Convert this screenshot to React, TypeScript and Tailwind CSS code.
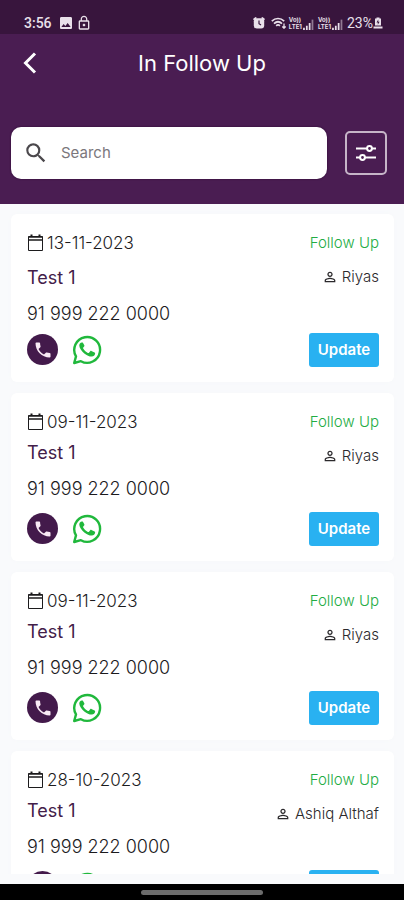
import React from "react";
import { MdImage, MdLockOutline, MdPersonOutline, MdPhone, MdSearch } from "react-icons/md";

type Lead = { date: string; name: string; phone: string; agent: string; spaced?: boolean };

const leads: Lead[] = [
  { date: "13-11-2023", name: "Test 1", phone: "91 999 222 0000", agent: "Riyas", spaced: true },
  { date: "09-11-2023", name: "Test 1", phone: "91 999 222 0000", agent: "Riyas" },
  { date: "09-11-2023", name: "Test 1", phone: "91 999 222 0000", agent: "Riyas" },
  { date: "28-10-2023", name: "Test 1", phone: "91 999 222 0000", agent: "Ashiq Althaf" },
];

function AlarmIcon() {
  return (
    <svg viewBox="0 0 12 12" className="size-3" fill="currentColor">
      <path d="M0 2 2.500 0l1.500 1-3 2.600zM12 2 9.500 0 8 1l3 2.600z" />
      <rect x="0.8" y="1.300" width="10.400" height="10.200" rx="3" />
      <path d="M6 3.500v3.200l2 1.300" fill="none" stroke="#38153d" strokeWidth="1.200" />
    </svg>
  );
}

function WifiIcon() {
  return (
    <svg viewBox="0 0 16 12" className="h-3 w-4" fill="none" stroke="currentColor" strokeWidth="1.7">
      <path d="M.8 4.200C4.500.6 9.500.6 13.200 4.200M3 6.600c2.500-2.300 5.500-2.300 8 0M5.200 8.800c1.200-1.100 2.500-1.100 3.700 0" />
      <path d="M13 6.500v4.700M11.300 9.500l1.700 1.700 1.700-1.700" strokeWidth="1.300" />
    </svg>
  );
}

function Signal() {
  return (
    <span className="flex items-end">
      <span className="flex flex-col text-[6px] leading-[7px] font-bold">
        <span>Vo))</span>
        <span>LTE1</span>
      </span>
      <svg viewBox="0 0 11 11" className="h-3 w-3" fill="currentColor">
        <path d="M1 9h1.600v2H1zM3.600 7h1.600v4H3.600zM6.200 4.500h1.600V11H6.200z" />
        <path d="M8.800 1.500h1.600V11H8.800z" opacity=".5" />
      </svg>
    </span>
  );
}

function BatteryIcon() {
  return (
    <svg viewBox="0 0 10 12" className="h-3 w-2.5" fill="currentColor">
      <path d="M3.500.5h3v1H8v7H2v-7h1.500zM.5 9.500h9v2h-9z" />
      <path d="M5.300 2.500 3.500 5.500h1.300v2.300L6.600 4.800H5.300z" fill="#38153d" />
    </svg>
  );
}

function CalendarIcon() {
  return (
    <svg viewBox="0 0 18 18" className="size-[18px]" fill="none" stroke="currentColor">
      <path d="M1.500 2.500h14v14h-14z" strokeWidth="1" />
      <path d="M1.500 3h14M1.500 6h14" strokeWidth="1.500" />
      <path d="M4.500.5v2.500M12.500.5v2.500" strokeWidth="2" />
    </svg>
  );
}

function WhatsAppIcon() {
  return (
    <svg viewBox="0 0 30 30" className="size-[30px]" fill="none">
      <path
        d="M2.200 28 4 21.400A12.900 12.900 0 1 1 8.900 26.200z"
        stroke="currentColor"
        strokeWidth="2.400"
        strokeLinejoin="round"
      />
      <path
        d="M11.200 8.200c-.4-.8-.8-.8-1.300-.8-1.600.1-2.700 1.600-2.600 3.400.2 2.400 2.500 5.500 5 7.700 2.600 2.200 5.600 3.300 7.600 3.100 1.600-.2 3.100-1.400 3.200-2.900.1-.6 0-.9-.5-1.200l-3.200-1.600c-.5-.2-.8-.1-1.200.3l-1.200 1.500c-.3.400-.6.400-1.100.2-2.200-1-3.700-2.500-4.700-4.300-.3-.5-.2-.8.1-1.100l1-1.200c.2-.4.200-.6 0-1z"
        fill="currentColor"
      />
    </svg>
  );
}

function StatusBar() {
  return (
    <div className="flex h-[34px] items-end justify-between bg-[#38153d] pr-[21px] pl-6 pb-[3px] text-[#e9e0ea]">
      <div className="flex items-center gap-0.5">
        <span className="mr-1 font-[Roboto] text-sm leading-4 font-medium">3:56</span>
        <MdImage className="size-4" />
        <MdLockOutline className="size-4" />
      </div>
      <div className="flex items-center gap-1">
        <AlarmIcon />
        <span className="flex items-center gap-0.5 pl-0.5">
          <WifiIcon />
          <Signal />
        </span>
        <Signal />
        <span className="flex items-center font-[Roboto] text-sm leading-4">
          23%
          <BatteryIcon />
        </span>
      </div>
    </div>
  );
}

function Header() {
  return (
    <header className="bg-[#4a1d52] text-white">
      <StatusBar />
      <div className="grid h-[58px] grid-cols-[60px_1fr_60px] items-center">
        <button type="button" aria-label="Back" className="flex h-10 items-center pl-[23px]">
          <svg viewBox="0 0 14 22" className="h-[22px] w-3.5" fill="none" stroke="currentColor" strokeWidth="3">
            <path d="M12 1.500 2.500 11l9.500 9.500" />
          </svg>
        </button>
        <h1 className="text-center text-[22px] leading-8">In Follow Up</h1>
      </div>
      <div className="flex items-center gap-[18px] pt-[35px] pr-[17px] pb-[25px] pl-[11px]">
        <label className="flex h-[52px] min-w-0 flex-1 items-center gap-3 rounded-[10px] bg-white pl-3 shadow-[0_0_2px_#2a0530]">
          <MdSearch className="size-[26px] shrink-0 text-[#4b484c]" />
          <input
            type="text"
            aria-label="Search"
            placeholder="Search"
            className="w-full min-w-0 bg-transparent text-[15px] text-gray-700 outline-none placeholder:text-[#7b777c]"
          />
        </label>
        <button
          type="button"
          aria-label="Filters"
          className="flex h-11 w-[42px] items-center justify-center rounded-[5px] border-2 border-[#c6b5c8]"
        >
          <svg viewBox="0 0 20 18" className="h-[18px] w-5" fill="none" stroke="currentColor" strokeWidth="2">
            <path d="M0 4.500h11M16 4.500h4M0 13.500h4M9 13.500h11" />
            <circle cx="13.500" cy="4.500" r="2.400" />
            <circle cx="6.500" cy="13.500" r="2.400" />
          </svg>
        </button>
      </div>
    </header>
  );
}

function LeadCard({ lead }: { lead: Lead }) {
  return (
    <li className="flex h-[168px] shrink-0 justify-between rounded-md bg-white pt-[17px] pr-[15px] pb-[15px] pl-4 shadow-[0_0_4px_#f7f8fa]">
      <div className="flex flex-col items-start pb-0.5">
        <p className="flex items-center gap-0.5 text-[17px] leading-6 font-light text-[#1c1b1d]">
          <CalendarIcon />
          {lead.date}
        </p>
        <h2 className={`${lead.spaced ? "mt-[11px]" : "mt-[7px]"} text-lg leading-6 text-[#432049]`}>{lead.name}</h2>
        <p className="mt-3 text-lg leading-6 font-light text-[#1c1b1d]">{lead.phone}</p>
        <div className="mt-auto flex items-center gap-3.5">
          <button
            type="button"
            aria-label="Call"
            className="flex size-[31px] items-center justify-center rounded-full bg-[#431a4b] text-[#f9eaf5]"
          >
            <MdPhone className="size-5" />
          </button>
          <button type="button" aria-label="WhatsApp" className="text-[#20b83c]">
            <WhatsAppIcon />
          </button>
        </div>
      </div>
      <div className="flex flex-col items-end">
        <p className="text-[15px] leading-6 font-light text-[#22ac43]">Follow Up</p>
        <p className="mt-[10px] flex items-center gap-1 text-[15px] leading-6 font-light text-[#2b292c]">
          <MdPersonOutline className="size-4" />
          {lead.agent}
        </p>
        <button
          type="button"
          className="mt-auto h-[34px] w-[70px] rounded-[3px] bg-[#29b1f1] text-[15px] font-semibold text-white"
        >
          Update
        </button>
      </div>
    </li>
  );
}

export default function App() {
  return (
    <div className="flex h-screen flex-col overflow-hidden bg-[#f9fafc] font-['Inter','Liberation_Sans',sans-serif]">
      <Header />
      <main className="mb-2.5 min-h-0 flex-1 overflow-y-auto [scrollbar-width:none]">
        <ul className="flex flex-col gap-[11px] pt-[10px] pr-[10px] pl-[11px]">
          {leads.map((lead, i) => (
            <LeadCard key={i} lead={lead} />
          ))}
        </ul>
      </main>
      <footer className="flex h-4 shrink-0 items-center justify-center bg-black">
        <div className="h-[5px] w-[122px] rounded-full bg-[#6c6c6c]" />
      </footer>
    </div>
  );
}
